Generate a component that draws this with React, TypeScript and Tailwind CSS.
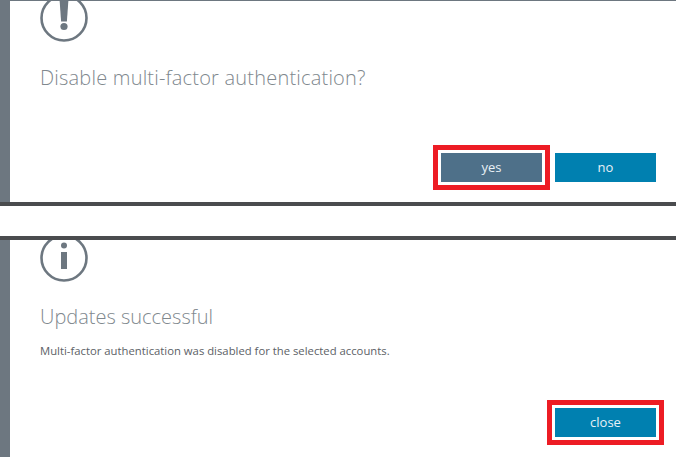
const actionBtn =
  "flex h-[29px] w-[101px] items-center justify-center pt-px text-[13px] text-[#e8f1f6]";

function AlertIcon() {
  return (
    <svg width="48" height="48" viewBox="0 0 48 48" className="block">
      <circle cx="24" cy="24" r="22.5" fill="none" stroke="#6d7780" strokeWidth="2.6" />
      <path d="M19.5 5h9l-1.6 22.5h-5.8z" fill="#6d7780" />
      <circle cx="24" cy="32.5" r="3.6" fill="#6d7780" />
    </svg>
  );
}

function InfoIcon() {
  return (
    <svg width="48" height="48" viewBox="0 0 48 48" className="block">
      <circle cx="24" cy="24" r="22.5" fill="none" stroke="#6d7780" strokeWidth="2.6" />
      <circle cx="24" cy="11.5" r="3" fill="#6d7780" />
      <rect x="21" y="18" width="6" height="17" fill="#6d7780" />
    </svg>
  );
}

function Panel({
  icon,
  iconOffset,
  title,
  titleClass,
  message,
  height,
  children,
}: {
  icon: React.ReactNode;
  iconOffset: string;
  title: string;
  titleClass: string;
  message?: string;
  height: string;
  children: React.ReactNode;
}) {
  return (
    <section className={`flex overflow-hidden bg-white ${height}`}>
      <div className="w-[10px] shrink-0 bg-[#6d7780]" />
      <div className="flex min-w-0 flex-1 flex-col pl-[30px] pr-[20px]">
        <div className={iconOffset}>{icon}</div>
        <h2 className={`text-[20px] leading-[28px] font-light text-[#80888e] ${titleClass}`}>{title}</h2>
        {message && <p className="mt-[13px] text-[11.3px] leading-[14px] text-[#5c6166]">{message}</p>}
        <div className="mt-auto flex justify-end gap-[13px]">{children}</div>
      </div>
    </section>
  );
}

export default function App() {
  return (
    <div
      className="h-[457px] w-[676px] overflow-hidden bg-white"
      style={{ fontFamily: '"Open Sans", "Noto Sans", sans-serif' }}
    >
      <div className="h-px bg-[#6d7780]" />
      <Panel
        icon={<AlertIcon />}
        iconOffset="-mt-[7px]"
        title="Disable multi-factor authentication?"
        titleClass="mt-[22px] tracking-[0.2px]"
        height="h-[201px]"
      >
        <div className="mb-[20px] flex gap-[13px]">
          <button className={`${actionBtn} bg-[#4e7089] outline-[5px] outline-offset-[3px] outline-[#ed1c24]`}>
            yes
          </button>
          <button className={`${actionBtn} bg-[#0080b0]`}>no</button>
        </div>
      </Panel>
      <div className="h-[4px] bg-[#4a4c4e]" />
      <div className="h-[30px] bg-white" />
      <div className="h-[4px] bg-[#4a4c4e]" />
      <Panel
        icon={<InfoIcon />}
        iconOffset="-mt-[6px]"
        title="Updates successful"
        titleClass="mt-[21px]"
        message="Multi-factor authentication was disabled for the selected accounts."
        height="h-[217px]"
      >
        <div className="mb-[20px]">
          <button className={`${actionBtn} bg-[#0080b0] outline-[5px] outline-offset-[3px] outline-[#ed1c24]`}>
            close
          </button>
        </div>
      </Panel>
    </div>
  );
}
